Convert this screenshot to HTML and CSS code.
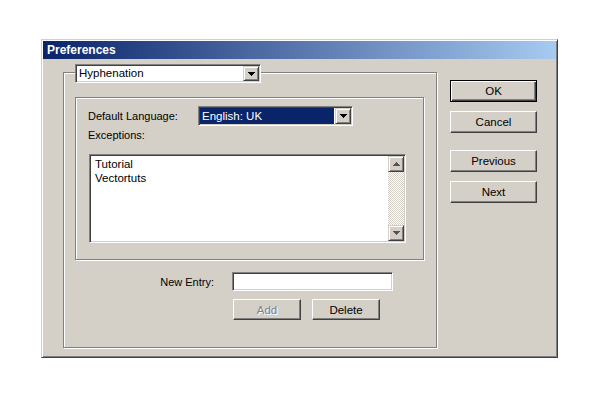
FILE: index.html
```html
<!DOCTYPE html>
<html lang="en">
<head>
  <meta charset="UTF-8" />
  <title>Preferences</title>
  <link rel="stylesheet" href="styles.css">
</head>
<body>
  <div class="window">
    <div class="titlebar">Preferences</div>
    <div class="content">
      <div class="group">
        <div class="combo legend-combo">
          <span class="combo-text">Hyphenation</span>
          <span class="combo-btn">
            <svg width="7" height="4" viewBox="0 0 7 4"><path d="M0 0H7V1H6V2H5V3H4V4H3V3H2V2H1V1H0Z" fill="#000"/></svg>
          </span>
        </div>

        <div class="inner-box">
          <div class="field-row">
            <span class="field-label">Default Language:</span>
            <div class="combo lang-combo">
              <span class="combo-text selected">English: UK</span>
              <span class="combo-btn">
                <svg width="7" height="4" viewBox="0 0 7 4"><path d="M0 0H7V1H6V2H5V3H4V4H3V3H2V2H1V1H0Z" fill="#000"/></svg>
              </span>
            </div>
          </div>
          <div class="caption">Exceptions:</div>
          <div class="listbox">
            <div class="list-items">
              <div>Tutorial</div>
              <div>Vectortuts</div>
            </div>
            <div class="scrollbar">
              <span class="scroll-btn">
                <svg width="7" height="4" viewBox="0 0 7 4"><path d="M3 0H4V1H5V2H6V3H7V4H0V3H1V2H2V1H3Z" fill="#555"/></svg>
              </span>
              <span class="scroll-track"></span>
              <span class="scroll-btn">
                <svg width="7" height="4" viewBox="0 0 7 4"><path d="M0 0H7V1H6V2H5V3H4V4H3V3H2V2H1V1H0Z" fill="#555"/></svg>
              </span>
            </div>
          </div>
        </div>

        <div class="entry-row">
          <span class="entry-label">New Entry:</span>
          <div class="textbox"></div>
        </div>
        <div class="entry-buttons">
          <button class="btn btn-small" disabled>Add</button>
          <button class="btn btn-small">Delete</button>
        </div>
      </div>

      <div class="side-buttons">
        <button class="btn btn-default">OK</button>
        <button class="btn">Cancel</button>
        <button class="btn btn-spaced">Previous</button>
        <button class="btn">Next</button>
      </div>
    </div>
  </div>
</body>
</html>
```

FILE: styles.css
```css
* {
    box-sizing: border-box;
    margin: 0;
    padding: 0;
}

body {
    background: #fff;
    font-family: 'Liberation Sans', Arial, sans-serif;
    font-size: 11px;
    color: #000;
    padding: 39px 0 0 41px;
}

.window {
    width: 517px;
    height: 319px;
    background: #d4d0c8;
    border: 1px solid;
    border-color: #d4d0c8 #404040 #404040 #d4d0c8;
    box-shadow: inset 1px 1px 0 #fff, inset -1px -1px 0 #808080;
    padding: 1px;
}

.titlebar {
    height: 18px;
    line-height: 18px;
    padding-left: 4px;
    color: #fff;
    font-weight: bold;
    font-size: 12px;
    background: linear-gradient(90deg, #0a246a, #a6caf0);
}

.content {
    display: flex;
    align-items: flex-start;
    padding: 13px 0 0 20px;
}

/* etched frames */
.group,
.inner-box {
    border: 1px solid #808080;
    box-shadow: inset 1px 1px 0 #fff, 1px 1px 0 #fff;
}

.group {
    width: 374px;
    height: 276px;
    padding-left: 11px;
}

.inner-box {
    width: 349px;
    height: 163px;
    margin-top: 14px;
    padding: 8px 0 0 12px;
}

/* sunken fields */
.combo,
.listbox,
.textbox {
    background: #fff;
    border: 1px solid;
    border-color: #808080 #fff #fff #808080;
    box-shadow: inset 1px 1px 0 #404040, inset -1px -1px 0 #d4d0c8;
    padding: 1px;
}

.combo {
    display: flex;
}

.combo-text {
    flex: 1;
    padding-left: 2px;
    line-height: 15px;
    font-size: 11.5px;
    white-space: nowrap;
}

.combo-text.selected {
    background: #0a246a;
    color: #fff;
    margin-right: 1px;
}

.combo-btn,
.scroll-btn {
    width: 16px;
    display: flex;
    align-items: center;
    justify-content: center;
    background: #d4d0c8;
    border: 1px solid;
    border-color: #d4d0c8 #404040 #404040 #d4d0c8;
    box-shadow: inset 1px 1px 0 #fff, inset -1px -1px 0 #808080;
}

.legend-combo {
    width: 186px;
    height: 19px;
    margin-top: -9px;
}

.field-row {
    display: flex;
    align-items: center;
    height: 20px;
}

.field-label {
    width: 110px;
}

.lang-combo {
    width: 155px;
    height: 20px;
}

.lang-combo .combo-text {
    line-height: 16px;
}

.caption {
    margin-top: 2px;
    line-height: 14px;
}

.listbox {
    display: flex;
    width: 317px;
    height: 89px;
    margin: 12px 0 0 1px;
}

.list-items {
    flex: 1;
    padding: 1px 4px;
    line-height: 14px;
    font-size: 11.5px;
}

.scrollbar {
    width: 16px;
    display: flex;
    flex-direction: column;
}

.scroll-btn {
    height: 16px;
}

.scroll-track {
    flex: 1;
    background: repeating-conic-gradient(#fff 0 25%, #d4d0c8 0 50%) 0 0 / 2px 2px;
}

.entry-row {
    display: flex;
    align-items: center;
    margin-top: 12px;
}

.entry-label {
    width: 139px;
    text-align: right;
    margin-right: 18px;
}

.textbox {
    width: 161px;
    height: 19px;
}

.entry-buttons {
    display: flex;
    gap: 11px;
    margin: 8px 0 0 158px;
}

/* raised buttons */
.btn {
    width: 87px;
    height: 22px;
    font-family: inherit;
    font-size: 11.5px;
    color: #000;
    background: #d4d0c8;
    border: 1px solid;
    border-color: #fff #404040 #404040 #fff;
    box-shadow: inset -1px -1px 0 #808080, inset 1px 1px 0 #d4d0c8;
}

.btn-small {
    width: 68px;
    height: 21px;
}

.btn:disabled {
    color: #808080;
    text-shadow: 1px 1px 0 #fff;
}

.btn-default {
    border-color: #000;
    box-shadow: inset 1px 1px 0 #fff, inset -1px -1px 0 #404040, inset -2px -2px 0 #808080;
}

.side-buttons {
    display: flex;
    flex-direction: column;
    gap: 9px;
    margin: 8px 0 0 13px;
}

.btn-spaced {
    margin-top: 8px;
}
```
